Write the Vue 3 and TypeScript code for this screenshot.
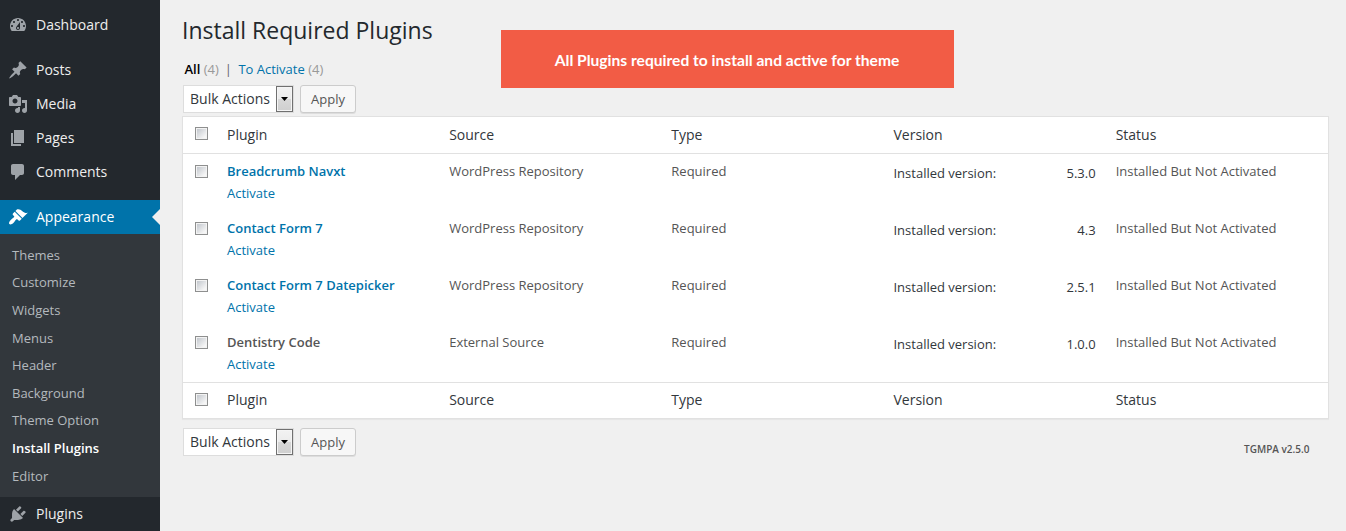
<script setup lang="ts">
interface MenuItem {
  label: string
  path: string
  gap?: boolean
}

interface PluginRow {
  name: string
  source: string
  version: string
  linked: boolean
}

const topMenu: MenuItem[] = [
  {
    label: 'Dashboard',
    path: 'M3.76 16h12.48c1.1-1.37 1.76-3.11 1.76-5 0-4.42-3.58-8-8-8s-8 3.58-8 8c0 1.89.66 3.63 1.76 5zM10 4c.55 0 1 .45 1 1s-.45 1-1 1-1-.45-1-1 .45-1 1-1zM6 6c.55 0 1 .45 1 1s-.45 1-1 1-1-.45-1-1 .45-1 1-1zm8 0c.55 0 1 .45 1 1s-.45 1-1 1-1-.45-1-1 .45-1 1-1zm-5.37 5.55L12 7v6c0 1.1-.9 2-2 2s-2-.9-2-2c0-.57.24-1.08.63-1.45zM4 10c.55 0 1 .45 1 1s-.45 1-1 1-1-.45-1-1 .45-1 1-1zm12 0c.55 0 1 .45 1 1s-.45 1-1 1-1-.45-1-1 .45-1 1-1zm-5 3c0-.55-.45-1-1-1s-1 .45-1 1 .45 1 1 1 1-.45 1-1z',
    gap: true,
  },
  {
    label: 'Posts',
    path: 'M10.44 3.02l1.82-1.82 6.36 6.35-1.83 1.82c-1.05-.68-2.48-.57-3.41.36l-.75.75c-.92.93-1.04 2.35-.35 3.41l-1.83 1.82-2.41-2.41-2.8 2.79c-.42.42-3.38 2.71-3.8 2.29s1.86-3.39 2.28-3.81l2.79-2.79L4.1 9.36l1.83-1.82c1.05.69 2.48.57 3.4-.36l.75-.75c.93-.92 1.05-2.35.36-3.41z',
  },
  {
    label: 'Media',
    path: 'M13 11V4c0-.55-.45-1-1-1h-1.67L9 1H5L3.67 3H2c-.55 0-1 .45-1 1v7c0 .55.45 1 1 1h10c.55 0 1-.45 1-1zM7 4.5c1.38 0 2.5 1.12 2.5 2.5S8.38 9.5 7 9.5 4.5 8.38 4.5 7 5.62 4.5 7 4.5zM14 6h5v10.5c0 1.38-1.12 2.5-2.5 2.5S14 17.88 14 16.5s1.12-2.5 2.5-2.5c.17 0 .34.02.5.05V9h-3V6zm-4 8.05V13h2v3.5c0 1.38-1.12 2.5-2.5 2.5S7 17.88 7 16.5 8.12 14 9.5 14c.17 0 .34.02.5.05z',
  },
  { label: 'Pages', path: 'M6 15V2h10v13H6zm-1 1h8v2H3V5h2v11z' },
  {
    label: 'Comments',
    path: 'M5 2h9c1.1 0 2 .9 2 2v7c0 1.1-.9 2-2 2h-2l-5 5v-5H5c-1.1 0-2-.9-2-2V4c0-1.1.9-2 2-2z',
    gap: true,
  },
]

const submenu: string[] = [
  'Themes',
  'Customize',
  'Widgets',
  'Menus',
  'Header',
  'Background',
  'Theme Option',
  'Install Plugins',
  'Editor',
]
const currentPage = 'Install Plugins'

const columns: string[] = ['Plugin', 'Source', 'Type', 'Version', 'Status']

const plugins: PluginRow[] = [
  { name: 'Breadcrumb Navxt', source: 'WordPress Repository', version: '5.3.0', linked: true },
  { name: 'Contact Form 7', source: 'WordPress Repository', version: '4.3', linked: true },
  { name: 'Contact Form 7 Datepicker', source: 'WordPress Repository', version: '2.5.1', linked: true },
  { name: 'Dentistry Code', source: 'External Source', version: '1.0.0', linked: false },
]
</script>

<template>
  <div class="admin">
    <nav class="sidebar">
      <a v-for="item in topMenu" :key="item.label" class="menu-item" :class="{ gap: item.gap }">
        <svg class="icon" viewBox="0 0 20 20"><path :d="item.path" /></svg>
        <span>{{ item.label }}</span>
      </a>
      <a class="menu-item active">
        <svg class="icon" viewBox="0 0 20 20">
          <path d="M14.48 11.06L7.41 3.99l1.5-1.5c.5-.56 2.3-.47 3.51.32 1.21.8 1.43 1.28 2.91 2.1 1.18.64 2.45 1.26 4.45.85zm-.71.71L6.7 4.7 4.93 6.47c-.39.39-.39 1.02 0 1.41l1.06 1.06c.39.39.39 1.03 0 1.42-.6.6-1.43 1.11-2.21 1.69-.35.26-.7.53-1.01.84C1.43 14.23.4 16.08 1.4 17.07c.99 1 2.84-.03 4.18-1.36.31-.31.58-.66.85-1.02.57-.78 1.08-1.61 1.69-2.21.39-.39 1.02-.39 1.41 0l1.06 1.06c.39.39 1.02.39 1.41 0z" />
        </svg>
        <span>Appearance</span>
        <i class="notch"></i>
      </a>
      <div class="submenu">
        <a v-for="s in submenu" :key="s" :class="{ current: s === currentPage }"><span>{{ s }}</span></a>
      </div>
      <a class="menu-item">
        <svg class="icon" viewBox="0 0 20 20">
          <path d="M13.11 4.36L9.87 7.6 8 5.73l3.24-3.24c.35-.34 1.05-.2 1.56.32.52.51.66 1.21.31 1.55zm-8 1.77l.91-1.12 9.01 9.01-1.19.84c-.71.71-2.63 1.16-3.82 1.16H6.14L4.9 17.26c-.59.59-1.54.59-2.12 0-.59-.58-.59-1.53 0-2.12l1.24-1.24v-3.88c0-1.13.4-3.19 1.09-3.89zm7.26 3.97l3.24-3.24c.34-.35 1.04-.21 1.55.31.52.51.66 1.21.31 1.55l-3.24 3.25z" />
        </svg>
        <span>Plugins</span>
      </a>
    </nav>

    <main class="content">
      <header class="top">
        <div class="heading">
          <h1>Install Required Plugins</h1>
          <div class="filters">
            <b>All</b> <span class="count">(4)</span><span class="bar">|</span><a>To Activate</a> <span class="count last">(4)</span>
          </div>
        </div>
        <div class="banner"><span>All Plugins required to install and active for theme</span></div>
      </header>

      <div class="bulk">
        <div class="select">
          <span>Bulk Actions</span>
          <div class="drop"><svg viewBox="0 0 7 4"><path d="M0 0h7L3.5 4z" /></svg></div>
        </div>
        <button>Apply</button>
      </div>

      <section class="table">
        <div class="row head">
          <div class="check"><i class="box"></i></div>
          <div v-for="c in columns" :key="c" class="cell">{{ c }}</div>
        </div>
        <div class="body">
          <div v-for="p in plugins" :key="p.name" class="row">
            <div class="check"><i class="box"></i></div>
            <div class="cell">
              <strong :class="{ linked: p.linked }">{{ p.name }}</strong>
              <a class="activate">Activate</a>
            </div>
            <div class="cell">{{ p.source }}</div>
            <div class="cell">Required</div>
            <div class="cell version"><span>Installed version:</span><span>{{ p.version }}</span></div>
            <div class="cell">Installed But Not Activated</div>
          </div>
        </div>
        <div class="row head foot">
          <div class="check"><i class="box"></i></div>
          <div v-for="c in columns" :key="c" class="cell">{{ c }}</div>
        </div>
      </section>

      <footer class="bottom">
        <div class="bulk">
          <div class="select">
            <span>Bulk Actions</span>
            <div class="drop"><svg viewBox="0 0 7 4"><path d="M0 0h7L3.5 4z" /></svg></div>
          </div>
          <button>Apply</button>
        </div>
        <span class="tgmpa">TGMPA v2.5.0</span>
      </footer>
    </main>
  </div>
</template>

<style>
body {
  margin: 0;
  background: #f0f0f0;
}
</style>

<style scoped>
.admin {
  display: flex;
  width: 1346px;
  height: 531px;
  overflow: hidden;
  background: #f0f0f0;
  color: #555;
  font: 13px/18px "Open Sans", sans-serif;
}
.sidebar {
  box-sizing: border-box;
  width: 160px;
  height: 531px;
  padding-top: 8px;
  background: #23282d;
  flex: none;
}
.menu-item {
  position: relative;
  display: flex;
  align-items: center;
  gap: 8px;
  height: 34px;
  padding-left: 8px;
  color: #eee;
  font-size: 14px;
}
.menu-item.gap {
  margin-bottom: 11px;
}
.icon {
  width: 20px;
  height: 20px;
  fill: #9ea3a8;
}
.active {
  background: #0073aa;
  color: #fff;
}
.active .icon {
  fill: #fff;
}
.notch {
  position: absolute;
  right: 0;
  top: 9px;
  border: 8px solid transparent;
  border-left: 0;
  border-right-color: #f0f0f0;
}
.submenu {
  box-sizing: border-box;
  height: 263px;
  padding: 7px 0 7.6px;
  background: #32373c;
  display: grid;
  grid-template-rows: repeat(9, 1fr);
}
.submenu a {
  display: flex;
  align-items: center;
  padding-left: 12px;
  color: #b4b9be;
}
.submenu .current {
  color: #fff;
  font-weight: 600;
}
.content {
  width: 1147px;
  margin-left: 22px;
}
.top {
  display: flex;
  height: 85px;
}
.heading {
  width: 319px;
}
h1 {
  margin: 16px 0 0;
  color: #23282d;
  font-size: 23px;
  font-weight: 400;
  line-height: 29px;
  white-space: nowrap;
}
.filters {
  margin: 15px 0 0 2.5px;
  white-space: nowrap;
}
.filters b {
  color: #000;
  font-weight: 600;
}
.filters a {
  color: #0073aa;
}
.count {
  color: #999;
}
.bar {
  margin: 0 6.4px 0 6px;
  color: #666;
}
.banner {
  box-sizing: border-box;
  display: flex;
  align-items: center;
  justify-content: center;
  width: 453px;
  height: 58px;
  margin-top: 30px;
  padding: 2px 1px 0 0;
  background: #f25c45;
  color: #fff;
  font: 700 15.6px/20px Lato, sans-serif;
}
.bulk {
  display: flex;
  gap: 6px;
  height: 28px;
  padding-left: 1px;
}
.select {
  box-sizing: border-box;
  display: flex;
  justify-content: space-between;
  width: 111px;
  height: 28px;
  padding-left: 6px;
  border: 1px solid #ddd;
  background: #fff;
  color: #32373c;
  font-size: 14px;
  line-height: 26px;
  white-space: nowrap;
}
.drop {
  box-sizing: border-box;
  display: flex;
  align-items: center;
  justify-content: center;
  width: 17px;
  border: 1px solid #707070;
  background: linear-gradient(#f2f2f2 0%, #ebebeb 50%, #d8d8d8 50%, #cfcfcf 100%);
  box-shadow: inset 0 0 0 1px #f5f5f5;
}
.drop svg {
  width: 7px;
  height: 4px;
}
button {
  box-sizing: border-box;
  width: 56px;
  height: 28px;
  padding: 0;
  border: 1px solid #ccc;
  border-radius: 3px;
  background: #f7f7f7;
  box-shadow: 0 1px 0 #ddd;
  color: #555;
  font: 13px/26px "Open Sans", sans-serif;
}
.table {
  box-sizing: border-box;
  height: 303px;
  margin-top: 3px;
  border: 1px solid #e1e1e1;
  background: #fff;
  box-shadow: 0 1px 1px rgba(0, 0, 0, 0.04);
}
.row {
  display: grid;
  grid-template-columns: 34px repeat(5, 222.17px);
  height: 57px;
}
.head {
  height: 36px;
  border-bottom: 1px solid #e1e1e1;
  color: #32373c;
  font-size: 14px;
}
.foot {
  height: 35px;
  border-bottom: 0;
  border-top: 1px solid #e1e1e1;
}
.cell {
  padding: 8px 10px;
  line-height: 19px;
  white-space: nowrap;
}
.foot .cell {
  padding-top: 7px;
}
.check {
  padding: 11px 0 0 12px;
}
.head .check {
  padding-top: 10px;
}
.box {
  box-sizing: border-box;
  display: block;
  width: 13px;
  height: 13px;
  border: 1px solid #8e8f8f;
  background: linear-gradient(135deg, #bcc1c8, #f6f6f6 80%);
  box-shadow: inset 0 0 0 1px #f3f3f3;
}
strong {
  display: block;
  font-weight: 600;
}
strong.linked,
.activate {
  color: #0073aa;
}
.activate {
  display: block;
  margin-top: 3px;
}
.version {
  display: flex;
  justify-content: space-between;
  padding-top: 10px;
  color: #32373c;
}
.bottom {
  display: flex;
  justify-content: space-between;
  margin-top: 9px;
}
.tgmpa {
  margin: 12px 19.5px 0 0;
  font-size: 10px;
  font-weight: 600;
}
</style>
